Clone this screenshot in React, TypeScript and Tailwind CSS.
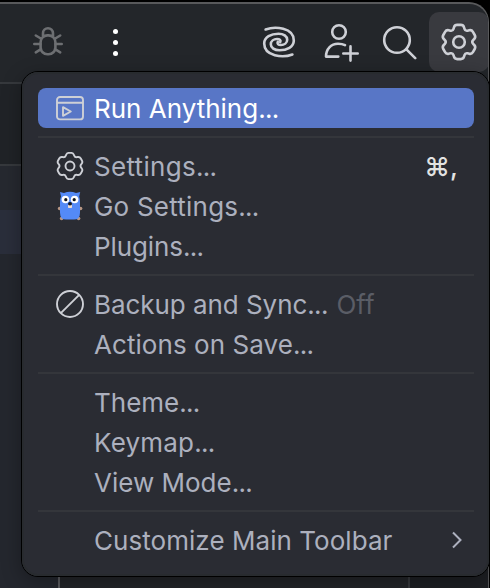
import type { ReactNode } from "react";

type Point = [number, number];

// Closed gear outline with six lobes and rounded corners.
function gearPath(c: number, outer: number, half: number, valley: number, round: number) {
  const pts: Point[] = [];
  for (let i = 0; i < 6; i++) {
    const a = (i * Math.PI) / 3;
    const rot = (x: number, y: number): Point => [
      c + x * Math.cos(a) - y * Math.sin(a),
      c + x * Math.sin(a) + y * Math.cos(a),
    ];
    pts.push(rot(-half, -outer), rot(half, -outer), rot(valley * 0.5, -valley * 0.866));
  }
  const toward = (p: Point, q: Point): Point => {
    const d = Math.hypot(q[0] - p[0], q[1] - p[1]);
    const t = Math.min(round / d, 0.5);
    return [p[0] + (q[0] - p[0]) * t, p[1] + (q[1] - p[1]) * t];
  };
  return (
    pts
      .map((p, i) => {
        const a = toward(p, pts[(i + pts.length - 1) % pts.length]);
        const b = toward(p, pts[(i + 1) % pts.length]);
        return `${i ? "L" : "M"}${a.join(" ")}Q${p.join(" ")} ${b.join(" ")}`;
      })
      .join("") + "Z"
  );
}

function BugIcon() {
  return (
    <svg width="32" height="32" viewBox="0 0 32 32" fill="none" stroke="#6d6f72" strokeWidth="2.6" strokeLinecap="round">
      <rect x="8.6" y="9.4" width="14.8" height="18.8" rx="6.8" />
      <path d="M11 9.7V7.2a5 5 0 0 1 10 0v2.5M2.3 18h6M23.7 18h6M3.8 9.5l5 3M28.2 9.5l-5 3M3.8 26.3L9 23.2M28.2 26.3L23 23.2" />
    </svg>
  );
}

function SwirlIcon() {
  return (
    <svg width="36" height="36" viewBox="0 0 36 36" fill="none" stroke="#ced0d6" strokeWidth="2.6" strokeLinecap="round">
      <path d="M4.6 5.5C14 2 32.8 3.5 32.8 16.5C32.8 23 26 26.3 18.5 26.3C13.5 26.3 9.8 23.8 9.8 20.2C9.8 17 12.8 15 16 15C18.8 15 20.2 16.5 19.2 18.2" />
      <path d="M31.4 30.5C22 34 3.2 32.5 3.2 19.5C3.2 13 10 9.7 17.5 9.7C22.5 9.7 26.2 12.2 26.2 15.8C26.2 19 23.2 21 20 21C17.2 21 15.8 19.5 16.8 17.8" />
    </svg>
  );
}

function AddUserIcon() {
  return (
    <svg width="36" height="40" viewBox="0 0 36 40" fill="none" stroke="#ced0d6" strokeWidth="2.6" strokeLinecap="round" strokeLinejoin="round">
      <circle cx="16" cy="10" r="6.8" />
      <path d="M15.3 34.6H3C3 27 8 21.7 15 21.7C18 21.7 20.2 22.2 22 23.2M27.5 24.4v14.2M20.3 31.5h14.4" />
    </svg>
  );
}

function SearchIcon() {
  return (
    <svg width="36" height="36" viewBox="0 0 36 36" fill="none" stroke="#ced0d6" strokeWidth="2.6" strokeLinecap="round">
      <circle cx="16" cy="16" r="12.8" />
      <path d="M25.2 25.2L34.2 34.2" />
    </svg>
  );
}

function GearIcon() {
  return (
    <svg width="40" height="40" viewBox="0 0 40 40" fill="none" stroke="#ced0d6" strokeWidth="2.6" strokeLinejoin="round">
      <path d={gearPath(20, 17.1, 4.3, 12.4, 2.5)} />
      <circle cx="20" cy="20" r="5.8" />
    </svg>
  );
}

function RunWindowIcon() {
  return (
    <svg width="28" height="28" viewBox="0 0 28 28" fill="none" stroke="#ced0d6" strokeWidth="1.9" strokeLinejoin="round">
      <rect x="1" y="3" width="26" height="22.4" rx="3" />
      <path d="M1 8.8h26M7 13.2v8.6l7.8-4.3Z" />
    </svg>
  );
}

function SmallGearIcon() {
  return (
    <svg width="28" height="28" viewBox="0 0 28 28" fill="none" stroke="#ced0d6" strokeWidth="1.9" strokeLinejoin="round">
      <path d={gearPath(14, 13.1, 3.1, 9.9, 2)} />
      <circle cx="14" cy="14" r="4.5" />
    </svg>
  );
}

function GopherIcon() {
  return (
    <svg width="28" height="30" viewBox="0 0 28 30">
      <g fill="#b89784">
        <circle cx="3.6" cy="17.5" r="1.8" />
        <circle cx="24.6" cy="17.5" r="1.8" />
        <circle cx="5.6" cy="27.5" r="1.8" />
        <circle cx="22.6" cy="27.5" r="1.8" />
      </g>
      <path fill="#548af7" d="M4 1L8 1.9Q14 -.2 20 1.9L24.2 1L23.2 5.5Q24 7.5 24 11.5V21.5Q24 28.6 18 28.6H10Q4 28.6 4 21.5V11.5Q4 7.5 5 5.5Z" />
      <circle cx="9.4" cy="8.5" r="3.8" fill="#fff" />
      <circle cx="18.6" cy="8.5" r="3.8" fill="#fff" />
      <circle cx="9.8" cy="8.7" r="1.6" fill="#111318" />
      <circle cx="18.2" cy="8.7" r="1.6" fill="#111318" />
      <rect x="12" y="13.7" width="4" height="3.3" rx=".8" fill="#f1ded2" />
      <ellipse cx="14" cy="12.8" rx="2" ry="1.7" fill="#16181d" />
    </svg>
  );
}

function OffIcon() {
  return (
    <svg width="28" height="28" viewBox="0 0 28 28" fill="none" stroke="#ced0d6" strokeWidth="1.9">
      <circle cx="14" cy="14" r="13" />
      <path d="M4.8 23.2L23.2 4.8" />
    </svg>
  );
}

interface MenuRowProps {
  icon?: ReactNode;
  children: ReactNode;
  right?: ReactNode;
  selected?: boolean;
}

function MenuRow({ icon, children, right, selected }: MenuRowProps) {
  return (
    <div className={`flex h-10 items-center rounded-lg pl-[18px] ${selected ? "bg-[#5876c6] text-white" : "text-[#acb0be]"}`}>
      <div className="mr-2.5 flex w-7 shrink-0 justify-center">{icon}</div>
      <div className="flex-1 whitespace-pre pt-0.5">{children}</div>
      {right}
    </div>
  );
}

function Dots() {
  return <span className="tracking-[-0.7px]">...</span>;
}

function Separator() {
  return <div className="my-2 h-0.5 bg-[#34363b]" />;
}

export default function App() {
  return (
    <div className="relative flex h-[588px] w-[490px] flex-col overflow-hidden bg-black pt-0.5 font-['Inter','Liberation_Sans',sans-serif]">
      <div className="flex w-[489px] flex-1 flex-col overflow-hidden rounded-tr-[20px] border-t-2 border-r border-[#58595b] bg-[#23262a]">
        <div className="flex h-[78px] shrink-0 items-center pb-0.5">
          <div className="ml-8"><BugIcon /></div>
          <div className="ml-[49px] flex w-1.5 flex-col items-center gap-1.5">
            <i className="size-[5px] rounded-full bg-white" />
            <i className="size-[5px] rounded-full bg-white" />
            <i className="size-[5px] rounded-full bg-white" />
          </div>
          <div className="ml-[143px]"><SwirlIcon /></div>
          <div className="ml-[26px]"><AddUserIcon /></div>
          <div className="ml-[22px]"><SearchIcon /></div>
          <div className="ml-3 flex size-[60px] shrink-0 items-center justify-center rounded-[10px] bg-[#393a3f]"><GearIcon /></div>
        </div>
        <div className="h-0.5 shrink-0 bg-[#36393d]" />
        <div className="h-20 shrink-0 bg-[#202327]" />
        <div className="h-0.5 shrink-0 bg-[#36393d]" />
        <div className="h-11 shrink-0 bg-[#262930]" />
        <div className="h-11 shrink-0 bg-[#2a2e3b]" />
        <div className="flex flex-1">
          <div className="w-[58px] bg-[#24272e]" />
          <div className="w-0.5 bg-[#58595d]" />
          <div className="w-[348px] bg-[#222428]" />
          <div className="w-0.5 bg-[#35373b]" />
          <div className="flex-1 bg-[#1d1f23]" />
        </div>
      </div>

      <div className="absolute left-[21px] top-[71px] h-[506px] w-[469px] rounded-[17px] border border-black bg-[#2a2c33] shadow-[0_5px_20px_rgba(0,0,0,0.3)]">
        <div className="h-full rounded-2xl border-2 border-[#282b2f] pl-3.5 pr-[13px] pt-3.5 text-[26px] leading-9">
          <MenuRow selected icon={<RunWindowIcon />}>Run Anything<Dots /></MenuRow>
          <Separator />
          <MenuRow icon={<SmallGearIcon />} right={<span className="mr-4 pt-0.5 font-medium text-[#e2e3e2]">⌘,</span>}>
            <span className="tracking-[0.3px]">Settings</span><Dots />
          </MenuRow>
          <MenuRow icon={<GopherIcon />}><span className="tracking-[0.22px]">Go Settings</span><Dots /></MenuRow>
          <MenuRow><span className="tracking-[-0.1px]">Plugins</span><Dots /></MenuRow>
          <Separator />
          <MenuRow icon={<OffIcon />}><span className="tracking-[-0.05px]">Backup and Sync</span><Dots /> <span className="ml-[1.5px] text-[#5a5d66]">Off</span></MenuRow>
          <MenuRow><span className="tracking-[0.06px]">Actions on Save</span><Dots /></MenuRow>
          <Separator />
          <MenuRow>Theme<Dots /></MenuRow>
          <MenuRow><span className="tracking-[0.2px]">Keymap</span><Dots /></MenuRow>
          <MenuRow>View Mode<Dots /></MenuRow>
          <Separator />
          <MenuRow
            right={
              <svg className="mr-[11px]" width="12" height="18" viewBox="0 0 12 18" fill="none" stroke="#acb0be" strokeWidth="2">
                <path d="M2 1.5L9.5 9L2 16.5" />
              </svg>
            }
          >
            <span className="tracking-[0.05px]">Customize Main Toolbar</span>
          </MenuRow>
        </div>
      </div>
    </div>
  );
}
